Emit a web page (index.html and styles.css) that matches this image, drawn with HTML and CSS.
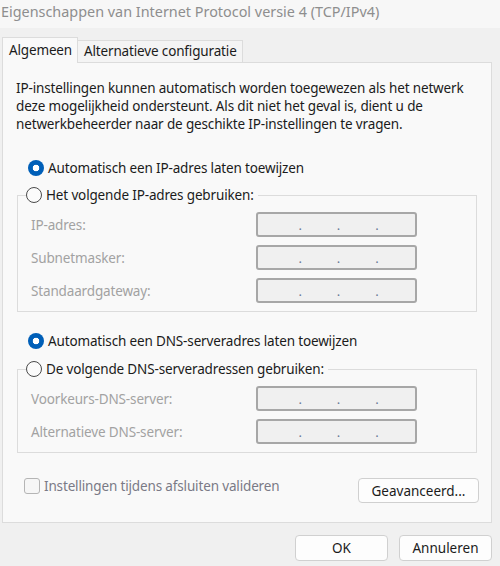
FILE: index.html
```html
<!DOCTYPE html>
<html lang="nl">
<head>
<meta charset="utf-8">
<title>Eigenschappen van Internet Protocol versie 4 (TCP/IPv4)</title>
<link rel="stylesheet" href="styles.css">
</head>
<body>
<div class="window">
  <div class="titlebar">Eigenschappen van Internet Protocol versie 4 (TCP/IPv4)</div>
  <div class="tabs">
    <div class="tab active">Algemeen</div>
    <div class="tab">Alternatieve configuratie</div>
  </div>
  <div class="panel">
    <p class="intro">IP-instellingen kunnen automatisch worden toegewezen als het netwerk deze mogelijkheid ondersteunt. Als dit niet het geval is, dient u de netwerkbeheerder naar de geschikte IP-instellingen te vragen.</p>

    <div class="radio-row first"><span class="radio checked"></span><span class="radio-label">Automatisch een IP-adres laten toewijzen</span></div>
    <fieldset class="group">
      <legend class="radio-row"><span class="radio"></span><span class="radio-label">Het volgende IP-adres gebruiken:</span></legend>
      <div class="field"><span class="field-label">IP-adres:</span><div class="ipbox"><span>.</span><span>.</span><span>.</span></div></div>
      <div class="field"><span class="field-label">Subnetmasker:</span><div class="ipbox"><span>.</span><span>.</span><span>.</span></div></div>
      <div class="field"><span class="field-label">Standaardgateway:</span><div class="ipbox"><span>.</span><span>.</span><span>.</span></div></div>
    </fieldset>

    <div class="radio-row second"><span class="radio checked"></span><span class="radio-label">Automatisch een DNS-serveradres laten toewijzen</span></div>
    <fieldset class="group">
      <legend class="radio-row"><span class="radio"></span><span class="radio-label">De volgende DNS-serveradressen gebruiken:</span></legend>
      <div class="field"><span class="field-label">Voorkeurs-DNS-server:</span><div class="ipbox"><span>.</span><span>.</span><span>.</span></div></div>
      <div class="field"><span class="field-label">Alternatieve DNS-server:</span><div class="ipbox"><span>.</span><span>.</span><span>.</span></div></div>
    </fieldset>

    <div class="bottom-row">
      <label class="check"><span class="checkbox"></span><span class="check-label">Instellingen tijdens afsluiten valideren</span></label>
      <button class="btn advanced">Geavanceerd...</button>
    </div>
  </div>
  <div class="actions">
    <button class="btn action">OK</button>
    <button class="btn action">Annuleren</button>
  </div>
</div>
</body>
</html>
```
FILE: styles.css
```css
* { box-sizing: border-box; }
html, body { margin: 0; padding: 0; }
body {
  width: 500px;
  height: 566px;
  overflow: hidden;
  background: #f0f0f0;
  font-family: "Noto Sans", "Open Sans", sans-serif;
  font-size: 13.5px;
  letter-spacing: -0.15px;
  color: #1b1b1b;
}
.window { width: 500px; height: 566px; }
.titlebar {
  height: 28px;
  background: #f7f7f7;
  color: #8e8e8e;
  font-size: 14.4px;
  letter-spacing: 0;
  line-height: 24px;
  padding-left: 1px;
  white-space: nowrap;
}
.tabs {
  display: flex;
  align-items: flex-end;
  height: 34px;
  padding-left: 2px;
}
.tab {
  height: 22px;
  padding: 0 5px 0 6px;
  border: 1px solid #dcdcdc;
  border-bottom: none;
  background: #f4f4f4;
  line-height: 20px;
  white-space: nowrap;
  margin-left: -1px;
}
.tab.active {
  height: 26px;
  width: 76px;
  margin-left: 0;
  margin-bottom: -1px;
  background: #f9f9f9;
  position: relative;
  z-index: 1;
  padding-left: 6px;
  line-height: 24px;
}
.panel {
  margin-left: 2px;
  width: 490px;
  height: 461px;
  border: 1px solid #dcdcdc;
  background: #f9f9f9;
  padding: 16px 12px 0 13px;
}
.intro {
  margin: 0;
  line-height: 18px;
}
.radio-row {
  display: flex;
  align-items: center;
  height: 20px;
}
.radio-row.first { margin: 25px 0 7px 12px; }
.radio-row.second { margin: 19px 0 8px 12px; }
.radio {
  width: 16px;
  height: 16px;
  border-radius: 50%;
  border: 1px solid #4a4a4a;
  background: #fbfbfb;
  margin-right: 4px;
  flex: none;
}
.radio.checked {
  border: none;
  background: radial-gradient(circle, #ffffff 0 3px, #005fb8 3.6px);
}
.group {
  margin: 0 0 0 1px;
  width: 460px;
  border: 1px solid #dcdcdc;
  padding: 7px 0 8px 13px;
}
.group legend.radio-row {
  padding: 0 4px 0 0;
  margin-left: -5px;
}
.field {
  display: flex;
  align-items: center;
  height: 25px;
  margin-bottom: 8px;
}
.field:last-child { margin-bottom: 0; }
.field-label {
  width: 225px;
  color: #a2a2a2;
  white-space: nowrap;
}
.ipbox {
  width: 161px;
  height: 25px;
  border: 2px solid #a7a7a7;
  border-radius: 3px;
  background: #f0f0f0;
  display: flex;
  justify-content: center;
  gap: 35px;
  align-items: flex-end;
  padding: 0 0 1px 4px;
  color: #6a7896;
  font-size: 13px;
  line-height: 18px;
}
.bottom-row {
  display: flex;
  justify-content: space-between;
  align-items: flex-start;
  margin-top: 25px;
  padding-left: 8px;
}
.check {
  display: flex;
  align-items: center;
  height: 16px;
}
.checkbox {
  width: 16px;
  height: 16px;
  border: 1px solid #b5b5b5;
  border-radius: 3px;
  background: #f6f6f6;
  margin-right: 4px;
}
.check-label { color: #7a7a86; }
.btn {
  font: inherit;
  color: #1b1b1b;
  background: #fdfdfd;
  border: 1px solid #d0d0d0;
  border-radius: 4px;
  height: 25px;
  padding: 0;
}
.advanced { width: 121px; }
.actions {
  display: flex;
  justify-content: flex-end;
  gap: 11px;
  padding: 12px 8px 0 0;
}
.action { width: 93px; height: 26px; }
```
